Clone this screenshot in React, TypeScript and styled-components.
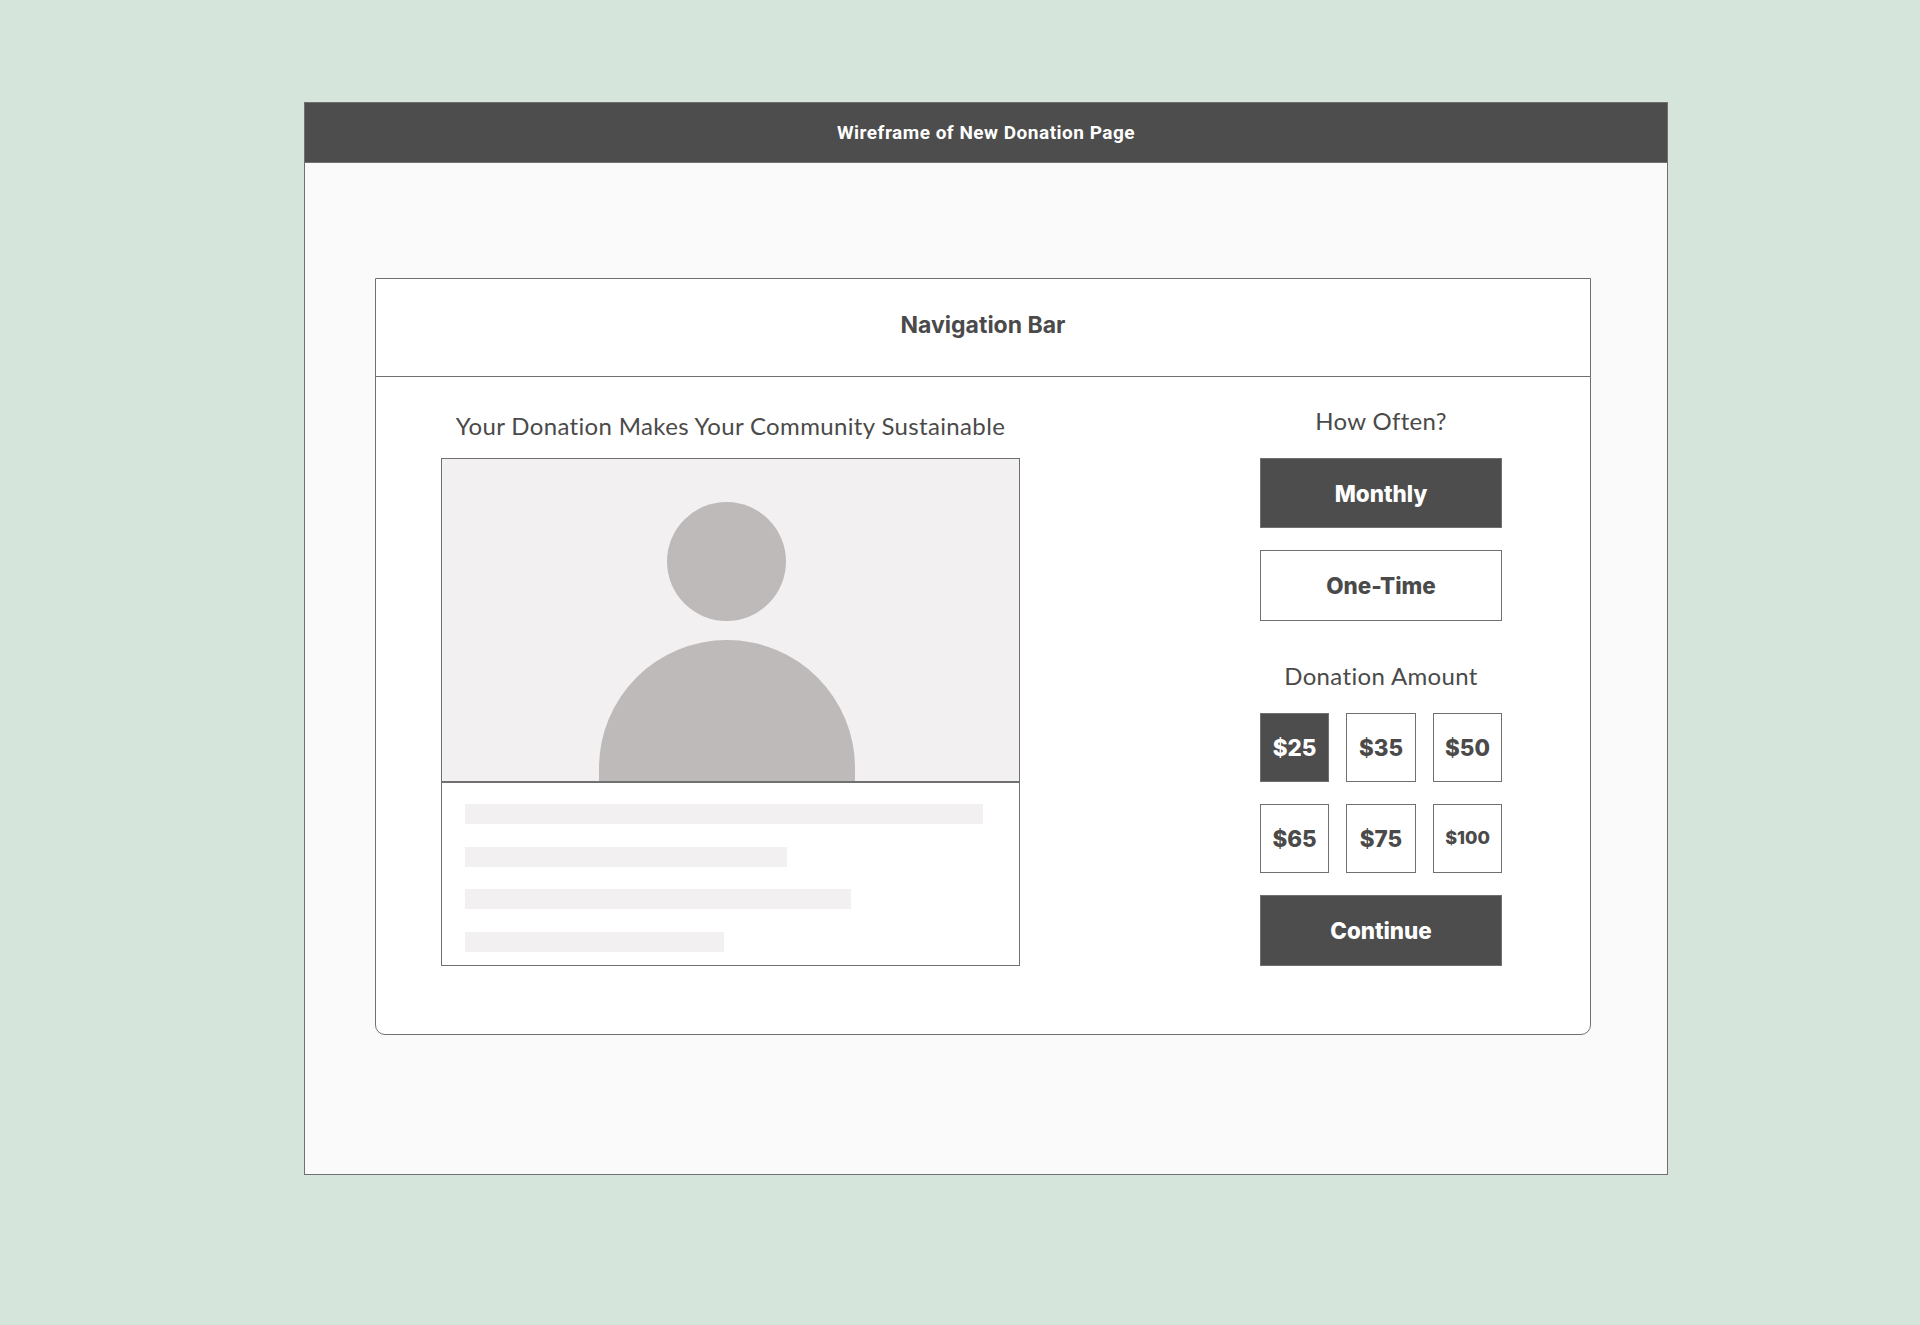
import React from 'react';
import styled, { createGlobalStyle } from 'styled-components';

const DARK = '#4d4d4d';
const LINE = '#707070';
const TEXT = '#4a4a4a';

const GlobalStyle = createGlobalStyle`
  html, body {
    margin: 0;
    padding: 0;
    background: #d6e5dc;
  }
  body {
    font-family: "Lato", "Open Sans", sans-serif;
    font-variant-ligatures: none;
  }
`;

const Page = styled.div`
  width: 1920px;
  height: 1325px;
  box-sizing: border-box;
  padding: 102px 0 0 304px;
`;

const Window = styled.div`
  width: 1364px;
  height: 1073px;
  box-sizing: border-box;
  border: 1px solid ${LINE};
  background: #fafafa;
`;

const WindowTitle = styled.header`
  height: 60px;
  box-sizing: border-box;
  border-bottom: 1px solid ${LINE};
  background: ${DARK};
  color: #fff;
  display: flex;
  align-items: center;
  justify-content: center;
  font-family: "Roboto", sans-serif;
  font-size: 19px;
  font-weight: 700;
  letter-spacing: 0.5px;
`;

const Canvas = styled.main`
  padding: 115px 0 0 70px;
`;

const Panel = styled.section`
  width: 1216px;
  height: 757px;
  box-sizing: border-box;
  border: 1px solid ${LINE};
  border-radius: 0 0 10px 10px;
  background: #fff;
`;

const NavBar = styled.nav`
  height: 98px;
  box-sizing: border-box;
  padding-bottom: 6px;
  border-bottom: 1px solid ${LINE};
  display: flex;
  align-items: center;
  justify-content: center;
  color: ${TEXT};
  font-family: "Inter", sans-serif;
  font-size: 23px;
  font-weight: 700;
`;

const Content = styled.div`
  display: flex;
  justify-content: space-between;
  padding: 0 88px 0 65px;
`;

const StoryColumn = styled.div`
  width: 579px;
`;

const Heading = styled.h2<{ $top: number; $bottom: number }>`
  margin: 0;
  padding: ${(p) => p.$top}px 0 ${(p) => p.$bottom}px;
  height: 34px;
  line-height: 34px;
  box-sizing: content-box;
  text-align: center;
  color: ${TEXT};
  font-size: 24px;
  font-weight: 400;
  letter-spacing: 0.35px;
  white-space: nowrap;
`;

const StoryCard = styled.div`
  height: 508px;
  box-sizing: border-box;
  border: 1px solid ${LINE};
  display: flex;
  flex-direction: column;
`;

const Photo = styled.div`
  height: 324px;
  box-sizing: border-box;
  flex: none;
  padding: 43px 8px 0 0;
  border-bottom: 2px solid ${LINE};
  background: #f2f0f0;
  display: flex;
  flex-direction: column;
  align-items: center;
  gap: 19px;
`;

const Head = styled.div`
  width: 119px;
  height: 119px;
  border-radius: 50%;
  background: #bebab9;
`;

const Shoulders = styled.div`
  width: 256px;
  height: 141px;
  border-radius: 128px 128px 0 0;
  background: #bebab9;
`;

const Lines = styled.div`
  padding: 21px 0 0 23px;
  display: flex;
  flex-direction: column;
  gap: 22.5px;
`;

const TextLine = styled.div<{ $width: number }>`
  width: ${(p) => p.$width}px;
  height: 20px;
  background: #f2f0f0;
`;

const ActionColumn = styled.div`
  width: 242px;
  display: flex;
  flex-direction: column;
`;

const Choice = styled.button<{ $active?: boolean; $height: number }>`
  height: ${(p) => p.$height}px;
  padding: 0;
  box-sizing: border-box;
  border: 1px solid ${LINE};
  border-radius: 0;
  background: ${(p) => (p.$active ? DARK : '#fff')};
  color: ${(p) => (p.$active ? '#fff' : TEXT)};
  font-family: "Inter", sans-serif;
  font-size: 22.4px;
  font-weight: 800;
`;

const Frequency = styled.div`
  display: flex;
  flex-direction: column;
  gap: 22px;
`;

const AmountGrid = styled.div`
  display: grid;
  grid-template-columns: 69px 70px 69px;
  justify-content: space-between;
  row-gap: 22px;
  margin-bottom: 22px;
`;

const Amount = styled(Choice)<{ $small?: boolean }>`
  font-size: ${(p) => (p.$small ? 18 : 22.4)}px;
  padding-bottom: ${(p) => (p.$small ? 2 : 0)}px;
`;

const bars = [518, 322, 386, 259];
const amounts = ['$25', '$35', '$50', '$65', '$75', '$100'];

export default function App() {
  return (
    <Page>
      <GlobalStyle />
      <Window>
        <WindowTitle>Wireframe of New Donation Page</WindowTitle>
        <Canvas>
          <Panel>
            <NavBar>Navigation Bar</NavBar>
            <Content>
              <StoryColumn>
                <Heading $top={32} $bottom={15}>
                  Your Donation Makes Your Community Sustainable
                </Heading>
                <StoryCard>
                  <Photo>
                    <Head />
                    <Shoulders />
                  </Photo>
                  <Lines>
                    {bars.map((w) => (
                      <TextLine key={w} $width={w} />
                    ))}
                  </Lines>
                </StoryCard>
              </StoryColumn>
              <ActionColumn>
                <Heading $top={27} $bottom={20}>
                  How Often?
                </Heading>
                <Frequency>
                  <Choice $active $height={70}>
                    Monthly
                  </Choice>
                  <Choice $height={71}>One-Time</Choice>
                </Frequency>
                <Heading $top={38} $bottom={20}>
                  Donation Amount
                </Heading>
                <AmountGrid>
                  {amounts.map((a) => (
                    <Amount
                      key={a}
                      $height={69}
                      $active={a === '$25'}
                      $small={a === '$100'}
                    >
                      {a}
                    </Amount>
                  ))}
                </AmountGrid>
                <Choice $active $height={71}>
                  Continue
                </Choice>
              </ActionColumn>
            </Content>
          </Panel>
        </Canvas>
      </Window>
    </Page>
  );
}
